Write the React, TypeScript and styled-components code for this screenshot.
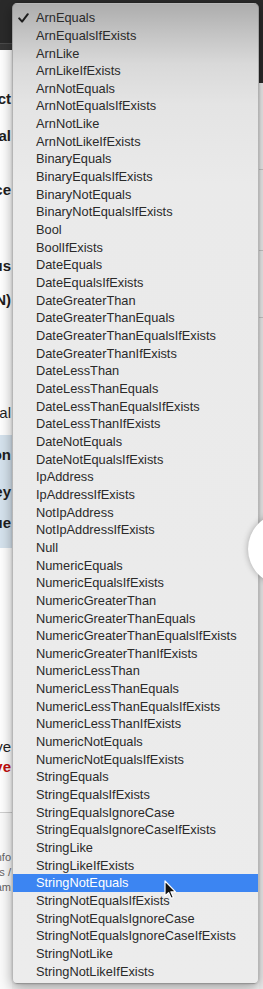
import React, { FC } from 'react';
import styled, { createGlobalStyle } from 'styled-components';

const OPERATORS = [
  'ArnEquals',
  'ArnEqualsIfExists',
  'ArnLike',
  'ArnLikeIfExists',
  'ArnNotEquals',
  'ArnNotEqualsIfExists',
  'ArnNotLike',
  'ArnNotLikeIfExists',
  'BinaryEquals',
  'BinaryEqualsIfExists',
  'BinaryNotEquals',
  'BinaryNotEqualsIfExists',
  'Bool',
  'BoolIfExists',
  'DateEquals',
  'DateEqualsIfExists',
  'DateGreaterThan',
  'DateGreaterThanEquals',
  'DateGreaterThanEqualsIfExists',
  'DateGreaterThanIfExists',
  'DateLessThan',
  'DateLessThanEquals',
  'DateLessThanEqualsIfExists',
  'DateLessThanIfExists',
  'DateNotEquals',
  'DateNotEqualsIfExists',
  'IpAddress',
  'IpAddressIfExists',
  'NotIpAddress',
  'NotIpAddressIfExists',
  'Null',
  'NumericEquals',
  'NumericEqualsIfExists',
  'NumericGreaterThan',
  'NumericGreaterThanEquals',
  'NumericGreaterThanEqualsIfExists',
  'NumericGreaterThanIfExists',
  'NumericLessThan',
  'NumericLessThanEquals',
  'NumericLessThanEqualsIfExists',
  'NumericLessThanIfExists',
  'NumericNotEquals',
  'NumericNotEqualsIfExists',
  'StringEquals',
  'StringEqualsIfExists',
  'StringEqualsIgnoreCase',
  'StringEqualsIgnoreCaseIfExists',
  'StringLike',
  'StringLikeIfExists',
  'StringNotEquals',
  'StringNotEqualsIfExists',
  'StringNotEqualsIgnoreCase',
  'StringNotEqualsIgnoreCaseIfExists',
  'StringNotLike',
  'StringNotLikeIfExists',
];

const SELECTED = 'ArnEquals';
const HOVERED = 'StringNotEquals';

const GlobalStyle = createGlobalStyle`
  html, body {
    margin: 0;
    padding: 0;
    overflow: hidden;
    background: #f3f3f3;
  }
`;

const CheckIcon = () => (
  <svg width="11" height="10" viewBox="0 0 11 10">
    <path d="M1.2 5.4 L4.1 8.6 L9.8 1.2" fill="none" stroke="#1e1e1e" strokeWidth="2" strokeLinecap="round" strokeLinejoin="round" />
  </svg>
);

const ArrowCursor = () => (
  <svg width="13" height="20" viewBox="0 0 13 20">
    <path d="M1 1 L1 16 L4.6 12.6 L7.2 18.4 L9.4 17.4 L6.9 11.8 L11.6 11.8 Z" fill="#111" stroke="#fff" strokeWidth="1.2" strokeLinejoin="round" />
  </svg>
);

type LabelKind = 'bold' | 'plain' | 'danger' | 'note';

interface LabelSpec {
  text: string;
  top: number;
  kind?: LabelKind;
}

// label ends peek out from under the open menu
const FORM_LABELS: LabelSpec[] = [
  { text: 'Effect', top: 39 },
  { text: 'Principal', top: 17 },
  { text: 'AWS Service', top: 34 },
  { text: 'Status', top: 56 },
  { text: 'Amazon Resource Name (ARN)', top: 14 },
  { text: 'Optional', top: 93, kind: 'plain' },
];

const CONDITION_LABELS: LabelSpec[] = [
  { text: 'Condition', top: 10 },
  { text: 'Key', top: 17 },
  { text: 'Value', top: 11 },
];

const ACTION_LABELS: LabelSpec[] = [
  { text: 'Save', top: 189, kind: 'plain' },
  { text: 'Remove', top: 0, kind: 'danger' },
];

const FOOTER_LABELS: LabelSpec[] = [
  { text: 'More info', top: 37, kind: 'note' },
  { text: 'Docs /', top: 0, kind: 'note' },
  { text: 'Team', top: 0, kind: 'note' },
];

const LabelList: FC<{ items: LabelSpec[] }> = ({ items }) => (
  <>
    {items.map((item) => (
      <FieldLabel key={item.text} $top={item.top} $kind={item.kind ?? 'bold'}>
        <span>{item.text}</span>
      </FieldLabel>
    ))}
  </>
);

export default function App() {
  return (
    <Page>
      <GlobalStyle />
      <LeftPane>
        <TopBar />
        <FormArea $height={385}>
          <LabelList items={FORM_LABELS} />
        </FormArea>
        <ConditionBand>
          <LabelList items={CONDITION_LABELS} />
        </ConditionBand>
        <FormArea $height={264}>
          <LabelList items={ACTION_LABELS} />
        </FormArea>
        <Divider />
        <Footer>
          <LabelList items={FOOTER_LABELS} />
        </Footer>
      </LeftPane>
      <MiddlePane>
        <TopBar />
      </MiddlePane>
      <RightPane>
        <RightTop />
        <RightLine $top={86} />
        <RightLine $top={80} />
        <RightLine $top={66} />
      </RightPane>

      <Menu>
        {OPERATORS.map((op) => (
          <MenuRow key={op} $active={op === HOVERED}>
            <CheckSlot>{op === SELECTED && <CheckIcon />}</CheckSlot>
            <RowText>{op}</RowText>
          </MenuRow>
        ))}
      </Menu>

      <Magnifier />
      <CursorSpot>
        <ArrowCursor />
      </CursorSpot>
    </Page>
  );
}

const Page = styled.div`
  position: relative;
  display: flex;
  width: 263px;
  height: 989px;
  overflow: hidden;
  background: #f3f3f3;
  font-family: 'Liberation Sans', Arial, sans-serif;
`;

const LeftPane = styled.div`
  width: 12px;
  display: flex;
  flex-direction: column;
  overflow: hidden;
  background: #fff;
`;

const MiddlePane = styled.div`
  flex: 1;
  display: flex;
  flex-direction: column;
  background: #f4f4f4;
`;

const RightPane = styled.div`
  width: 4px;
  display: flex;
  flex-direction: column;
  background: #efefef;
`;

const TopBar = styled.div`
  height: 43px;
  flex-shrink: 0;
  background: #2a2a2a;
  border-bottom: 1px solid #4b4b4b;
  box-shadow: 0 6px 0 #363636;
  margin-bottom: 6px;
`;

const RightTop = styled.div`
  height: 83px;
  background: #2a2a2a;
`;

const RightLine = styled.div<{ $top: number }>`
  margin-top: ${({ $top }) => $top}px;
  height: 1px;
  background: #c9c9c9;
`;

const FormArea = styled.div<{ $height: number }>`
  height: ${({ $height }) => $height}px;
  flex-shrink: 0;
  display: flex;
  flex-direction: column;
  background: #fff;
`;

const ConditionBand = styled.div`
  height: 113px;
  flex-shrink: 0;
  display: flex;
  flex-direction: column;
  background: #d6e3ee;
`;

const Divider = styled.div`
  height: 1px;
  flex-shrink: 0;
  background: #cfcfcf;
`;

const Footer = styled.div`
  flex: 1;
  display: flex;
  flex-direction: column;
  background: #fbfbfb;
`;

const FieldLabel = styled.div<{ $top: number; $kind: LabelKind }>`
  margin-top: ${({ $top }) => $top}px;
  height: ${({ $kind }) => ($kind === 'note' ? 15 : 20)}px;
  line-height: ${({ $kind }) => ($kind === 'note' ? 15 : 20)}px;
  flex-shrink: 0;
  display: flex;
  justify-content: flex-end;
  padding-right: 1px;
  white-space: nowrap;
  font-size: ${({ $kind }) => ($kind === 'note' ? 11 : 15)}px;
  font-weight: ${({ $kind }) => ($kind === 'bold' || $kind === 'danger' ? 700 : 400)};
  color: ${({ $kind }) =>
    $kind === 'danger' ? '#c40f0f' : $kind === 'note' ? '#666' : '#1f1f1f'};
`;

const Menu = styled.div`
  position: absolute;
  left: 12px;
  top: 3px;
  width: 247px;
  height: 981px;
  box-sizing: border-box;
  padding: 5.2px 0 4px;
  border-radius: 5px;
  border: 1px solid rgba(120, 120, 120, 0.45);
  background: linear-gradient(
    180deg,
    #adadad 0px,
    #c4c4c4 30px,
    #d9d9d9 60px,
    #e4e4e4 100px,
    #eaeaea 180px,
    #ececec 100%
  );
  box-shadow: 0 4px 14px rgba(0, 0, 0, 0.35), 0 0 2px rgba(0, 0, 0, 0.2);
  display: flex;
  flex-direction: column;
  font-family: 'Liberation Sans', Arial, sans-serif;
`;

const MenuRow = styled.div<{ $active: boolean }>`
  height: 17.67px;
  flex-shrink: 0;
  display: flex;
  align-items: center;
  background: ${({ $active }) => ($active ? '#3c85f2' : 'transparent')};
  color: ${({ $active }) => ($active ? '#fff' : '#2a2a2a')};
`;

const CheckSlot = styled.div`
  width: 23px;
  height: 100%;
  box-sizing: border-box;
  padding-left: 5px;
  display: flex;
  align-items: center;
`;

const RowText = styled.span`
  font-size: 12.8px;
  line-height: 17.67px;
  white-space: nowrap;
`;

const Magnifier = styled.div`
  position: absolute;
  left: 248px;
  top: 513px;
  width: 72px;
  height: 72px;
  border-radius: 50%;
  background: #fff;
  box-shadow: 0 0 6px rgba(0, 0, 0, 0.3);
`;

const CursorSpot = styled.div`
  position: absolute;
  left: 164px;
  top: 880px;
  display: flex;
`;
